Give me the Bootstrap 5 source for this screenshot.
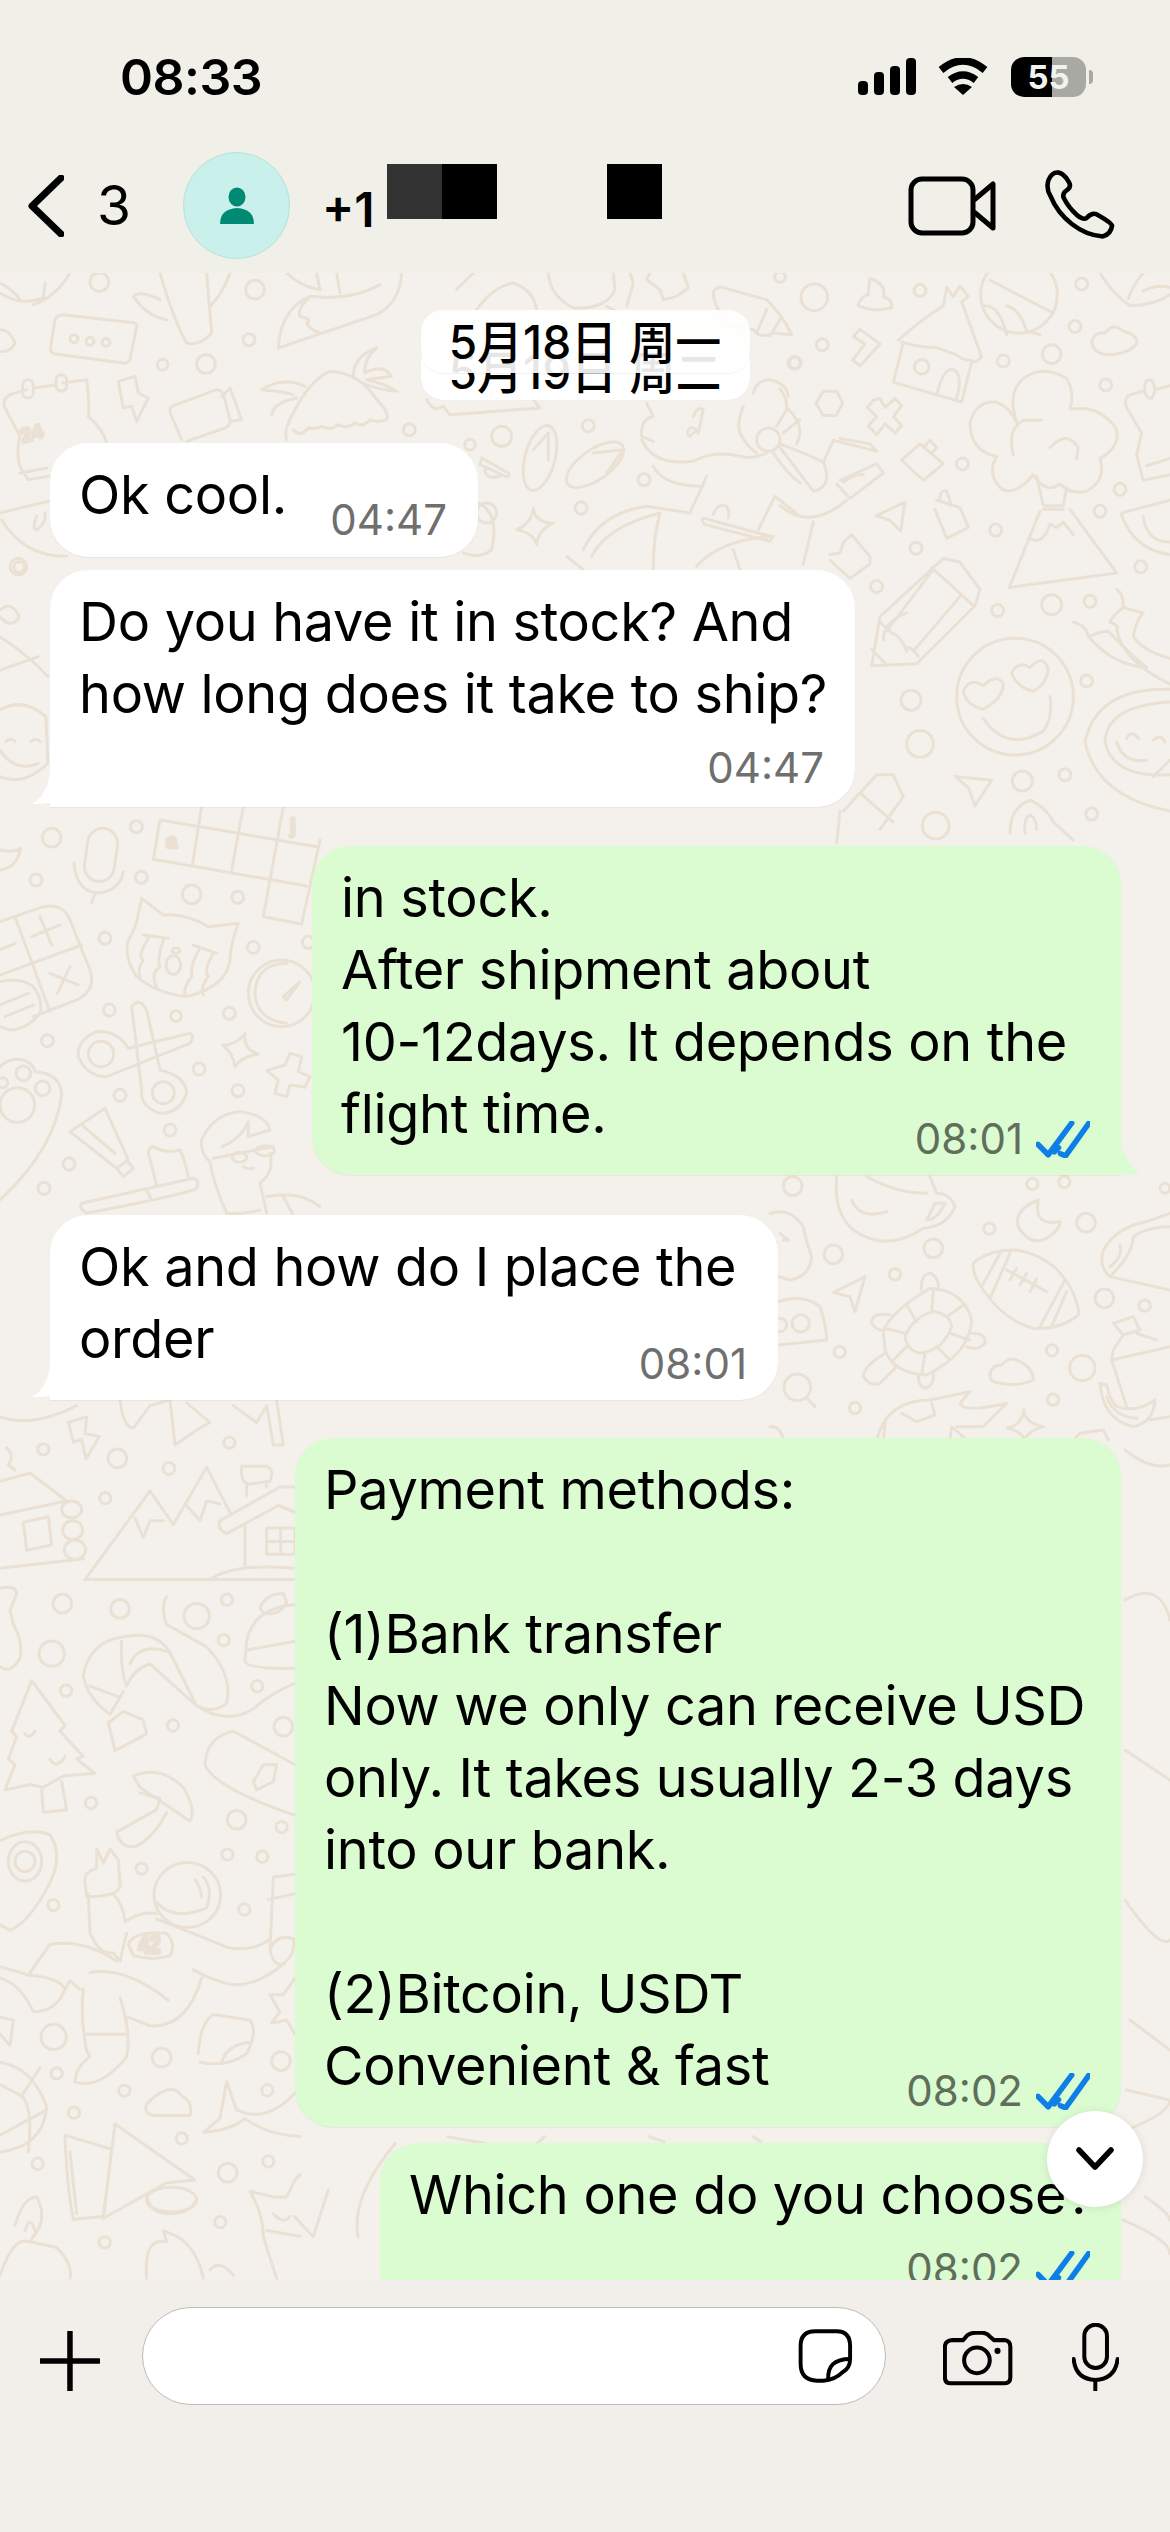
<!DOCTYPE html>
<html lang="en">
<head>
<meta charset="UTF-8">
<meta name="viewport" content="width=device-width, initial-scale=1.0">
<title>Chat</title>
<link href="https://cdn.jsdelivr.net/npm/bootstrap@5.3.0/dist/css/bootstrap.min.css" rel="stylesheet">
<style>
    html, body { margin: 0; background: #f2efea; }
    .phone { width: 1170px; height: 2532px; font-family: Inter, "Noto Sans CJK SC", sans-serif; color: #000; }

    /* top */
    .top-area { height: 273px; background: #f0efe8; flex: none; }
    .status-row { height: 152px; padding: 57px 77px 0 120px; }
    .clock { font-size: 50px; font-weight: 600; line-height: 40px; letter-spacing: -.5px; }
    .batt { width: 75px; height: 40px; border-radius: 13px; margin-left: 23px; font-size: 33px; font-weight: 700; line-height: 40px; color: #f2f2ee; text-align: center;
            background: linear-gradient(90deg, #000 55%, #a9a9a3 55%); }
    .batt-nub { width: 4px; height: 14px; margin-left: 3px; border-radius: 0 4px 4px 0; background: #a9a9a3; }
    .wifi-icon { margin-left: 22px; }
    .nav-row { height: 107px; padding-left: 28px; padding-right: 54px; }
    .unread { font-size: 55px; margin-left: 33px; width: 86px; }
    .avatar { width: 107px; height: 107px; border-radius: 50%; background: #c9f0ea; border: 1px solid #b5e2da; margin-right: 32px; }
    .peer { font-size: 48px; font-weight: 600; line-height: 60px; margin-top: 8px; }
    .mask-a, .mask-b { width: 110px; height: 55px; margin-left: 12px; margin-top: -28px; background: linear-gradient(90deg, #333 50%, #000 50%); }
    .mask-b { width: 55px; margin-left: 110px; background: #000; }

    /* chat */
    .chat { background: #f4f1ec; padding-top: 67px; }
    .wallpaper { left: 0; top: 0; width: 1170px; height: 2007px; }
    .wallpaper * { fill: none; stroke: #eae1d4; stroke-width: 3px; stroke-linecap: round; stroke-linejoin: round; vector-effect: non-scaling-stroke; }
    .wallpaper text { font-family: "Liberation Sans", sans-serif; font-size: 60px; font-weight: 700; }
    .stack { z-index: 1; }
    .day-pill { width: 329px; height: 60px; margin: 0 auto 43px; background: #fff; border-radius: 22px; font-size: 46px; font-weight: 500; line-height: 64px; text-align: center; box-shadow: 0 0 1px rgba(0,0,0,.1); white-space: nowrap; }
    .day-over { left: 0; top: -30px; width: 329px; height: 63px; background: rgba(255,255,255,.9); border-radius: 22px; box-shadow: 0 1px 1px rgba(0,0,0,.06); line-height: 64px; }

    .msg { position: relative; padding: 16px 20px 25px 29px; font-size: 54px; line-height: 72px; border-radius: 38px; box-shadow: 0 1px 1px rgba(0,0,0,.05); letter-spacing: -.3px; white-space: nowrap; }
    .msg-in { background: #fff; margin-left: 50px; align-self: flex-start; }
    .msg-out { background: #dbfbd0; margin-right: 49px; align-self: flex-end; }
    .w1 { width: 428px; margin-bottom: 13px; padding-bottom: 26px; }
    .w2 { width: 805px; margin-bottom: 39px; }
    .w3 { width: 809px; margin-bottom: 40px; }
    .w4 { width: 728px; margin-bottom: 38px; }
    .w5 { width: 826px; margin-bottom: 16px; }
    .w6 { width: 741px; }
    .tail-l { border-bottom-left-radius: 0; }
    .tail-r { border-bottom-right-radius: 0; }
    .tail-svg-l { left: -18px; bottom: 0; width: 50px; height: 40px; }
    .tail-svg-r { right: -19px; bottom: 0; width: 50px; height: 40px; }
    .stamp { font-size: 42px; line-height: 42px; letter-spacing: 0; color: #6f6f6f; align-self: flex-end; flex: none; margin-bottom: -10px; margin-right: 11px; }
    .msg-out .stamp { color: #5f6f5c; }
    .stamp svg { width: 54px; height: 37px; margin-left: 13px; vertical-align: -4px; }
    .stamp-line { margin-top: 17px; margin-bottom: -7px; }

    .down-btn { right: 27px; top: 1838px; width: 96px; height: 96px; border-radius: 50%; background: #fff; z-index: 2; box-shadow: 0 1px 8px rgba(0,0,0,.1); }

    /* bottom */
    .composer { height: 252px; flex: none; background: #f2efea; padding: 27px 51px 0 40px; }
    .input-pill { width: 745px; height: 98px; margin: 0 57px 0 42px; background: #fff; border: 1.5px solid #bcbcb8; border-radius: 49px; padding-right: 31px; }
    .mic-icon { margin-left: 59px; }
</style>
</head>
<body>
<div class="phone d-flex flex-column overflow-hidden">

    <div class="top-area">
        <div class="status-row d-flex align-items-start justify-content-between">
            <div class="clock">08:33</div>
            <div class="d-flex align-items-center">
                <svg width="58" height="38" viewBox="0 0 58 38">
                    <rect x="0" y="23" width="10" height="14" rx="4"/>
                    <rect x="16" y="14" width="10" height="23" rx="4"/>
                    <rect x="32" y="8" width="10" height="29" rx="4"/>
                    <rect x="48" y="0" width="10" height="37" rx="4"/>
                </svg>
                <svg class="wifi-icon" width="50" height="38" viewBox="0 0 50 38">
                    <path d="M3 12 Q25 -6 47 12" fill="none" stroke="#000" stroke-width="7.5"/>
                    <path d="M12 22 Q25 12 38 22" fill="none" stroke="#000" stroke-width="7.5"/>
                    <path d="M16 29 Q25 23 34 29 L25 37Z"/>
                </svg>
                <div class="batt">55</div>
                <div class="batt-nub"></div>
            </div>
        </div>
        <div class="nav-row d-flex align-items-center">
            <svg width="36" height="62" viewBox="0 0 36 62"><path d="M33 3 L4 31 L33 59" fill="none" stroke="#000" stroke-width="7" stroke-linecap="round" stroke-linejoin="round"/></svg>
            <div class="unread">3</div>
            <div class="avatar d-flex align-items-center justify-content-center">
                <svg width="36" height="38" viewBox="0 0 36 38"><ellipse cx="18" cy="10" rx="8.5" ry="9.5" fill="#018a73"/><path d="M1 37 Q1 22 18 21 Q35 22 35 37Z" fill="#018a73"/></svg>
            </div>
            <div class="peer">+1</div>
            <div class="mask-a"></div>
            <div class="mask-b"></div>
            <div class="ms-auto d-flex align-items-center gap-5">
                <svg width="88" height="60" viewBox="0 0 88 60" fill="none" stroke="#000" stroke-width="5" stroke-linejoin="round"><rect x="3" y="3" width="62" height="54" rx="11"/><path d="M66 24 L85 8 V52 L66 36"/></svg>
                <svg width="72" height="72" viewBox="670 425 220 220"><path d="M715 433 Q695 430 684 455 Q675 480 690 505 Q710 555 755 590 Q800 625 850 628 Q875 620 878 595 Q875 585 830 560 Q815 555 800 572 Q790 578 770 562 Q745 540 730 510 Q725 495 742 485 Q755 475 745 460 Q730 435 715 433Z" fill="none" stroke="#000" stroke-width="14" stroke-linejoin="round"/></svg>
            </div>
        </div>
    </div>

    <div class="chat flex-grow-1 position-relative overflow-hidden d-flex flex-column">
        <svg class="wallpaper position-absolute" viewBox="0 273 1170 2007" id="wall">
            <g transform="translate(0,273) scale(.3333)">
                <path d="M190 125 L405 150 Q415 155 408 170 L390 260 Q385 272 370 270 L165 243 Q148 238 152 222 L165 140 Q170 125 190 125Z"/>
                <path d="M0 60 Q60 100 130 75 L135 30 M0 30 Q40 50 60 80 M100 95 Q170 70 210 0"/>
                <path d="M480 0 Q520 140 560 210 Q600 220 635 180 L620 0 M500 140 Q440 130 400 70 Q420 50 480 80 M690 0 Q670 60 630 100"/>
                <path d="M835 225 L1130 125 Q1200 90 1205 0 M835 225 Q840 110 930 70 Q1050 85 1140 35 M930 70 Q890 110 900 130 Q940 140 920 150 Q930 170 960 180 M860 0 Q900 40 960 50 L950 0 M1010 0 L1020 60"/>
                <path d="M80 350 L30 365 Q5 380 15 405 L60 490 Q45 550 65 590 L85 620 L200 600 M60 600 L140 585 M190 330 L260 320 Q270 400 265 430 Q310 470 320 510"/>
                <rect x="68" y="320" width="32" height="55" rx="16"/><rect x="168" y="305" width="32" height="50" rx="16"/><path d="M100 345 L168 335"/>
                <text x="68" y="510" transform="rotate(-15 68 510)">24</text>
                <path d="M355 325 L405 310 L415 360 L445 375 L410 445 L395 400 L370 405Z"/>
                <path d="M515 400 L650 350 Q665 350 670 365 L690 440 Q690 460 675 465 L560 505 M515 400 Q505 410 515 430 L545 500 M665 370 L690 345 L725 440 L690 445"/>
                <path d="M860 500 Q850 470 880 420 Q930 320 990 295 Q1080 300 1130 380 Q1170 420 1160 440 Q1130 450 1110 440 Q1090 465 1065 450 Q1040 470 1015 455 Q990 475 965 460 Q940 470 925 465 Q900 495 880 470"/>
                <path d="M915 340 Q850 310 785 350 Q850 355 880 365 M890 375 Q820 390 815 425 M1060 310 Q1060 250 1130 225 Q1090 260 1095 300 Q1150 270 1175 310 L1100 320 Q1150 330 1190 355 Q1130 350 1090 330"/>
                <path d="M0 720 L145 685 M5 740 Q70 850 200 850 M110 730 Q95 770 110 770 Q140 750 135 720 M0 170 Q30 170 45 210 Q30 240 0 235"/>
            </g>
            <g transform="translate(420,273) scale(.3333)">
                <path d="M110 50 L160 0 M170 110 Q220 40 280 30 Q340 50 350 110 M385 0 Q390 70 460 105 Q560 110 585 50 L580 0 M560 100 L590 115 M620 100 L640 30 L630 0 M690 0 L680 20 L720 50 L730 80 L770 70 L805 45 L790 0"/>
                <path d="M880 60 Q890 30 930 50 Q1000 70 1040 80 Q1090 130 1115 185 L1060 180 Q1020 200 1000 170 L930 160 Q880 100 880 60 M1040 110 L1010 180 M1080 140 L1050 190"/>
                <path d="M20 380 Q40 420 70 400 L90 425 L360 405 L340 380"/>
                <ellipse cx="360" cy="555" rx="45" ry="100" transform="rotate(15 360 555)"/>
                <path d="M340 530 L385 480 L385 560"/>
                <ellipse cx="525" cy="575" rx="100" ry="45" transform="rotate(-35 525 575)"/>
                <path d="M520 540 L610 530 L560 600"/>
                <path d="M810 490 Q825 470 835 480 L850 410 Q830 400 820 430 M810 490 Q795 480 810 465 Q825 460 835 480"/>
                <path d="M680 390 L700 430 Q660 440 665 490 L700 505 M665 500 Q700 580 820 565 Q880 530 960 550 Q1000 560 1040 540 M860 610 L810 720 M1060 540 Q1100 600 1140 630 M700 580 Q730 640 850 640"/>
                <path d="M1000 360 Q1010 320 1050 320 Q1100 330 1105 370 M970 400 Q950 450 960 480 Q980 520 1010 540 M1070 460 L1100 410 M1090 480 L1140 440"/>
                <path d="M185 555 L265 600 Q270 610 260 612 L180 575Z M195 590 Q195 620 240 610 M175 690 Q240 720 215 830 Q180 860 130 840"/>
                <path d="M340 705 Q345 750 400 750 Q355 770 350 815 Q340 780 290 770 Q335 750 340 705Z"/>
                <path d="M490 830 Q540 720 680 700 L810 720 M515 850 Q560 760 720 720 M440 850 L490 890 M720 720 Q700 790 700 890 M850 735 L1050 790 Q1060 795 1050 805 L855 755 Q840 740 850 735 M880 725 Q890 690 920 700 Q930 715 925 735 M1015 770 L1065 670 L1140 730 M830 880 Q900 800 1060 790 M940 830 L960 890"/>
            </g>
            <g transform="translate(780,273) scale(.3333,.3636)">
                <path d="M108 358 L130 325 L170 325 L188 358 L168 392 L130 392Z"/>
                <path d="M235 85 Q250 60 265 60 Q265 40 270 15 Q320 30 310 65 Q340 75 335 95 Q280 110 235 90"/>
                <path d="M355 185 Q420 130 490 90 L500 40 L520 65 L540 35 L565 65 L545 80 L605 230 Q590 250 570 240 Q550 240 530 225 Q500 215 470 205 Q420 205 365 190 M370 190 L340 300 L545 355 L575 245 M470 335 Q490 260 520 265 Q550 280 530 345"/>
                <path d="M630 20 L820 110 M615 90 Q660 90 680 170 M680 90 Q720 100 740 160 L780 170"/>
                <path d="M960 0 Q1000 60 1050 90 Q1120 90 1170 60 M1045 70 Q1060 30 1090 0 M1090 50 Q1130 30 1170 40"/>
                <path d="M935 190 Q945 160 975 165 Q1000 135 1030 160 Q1075 170 1070 195 Q1040 225 980 225 Q940 220 935 190Z"/>
                <path d="M240 155 L300 195 L240 255 L218 240 L255 195 L220 175Z"/>
                <path d="M300 345 L315 370 L345 345 L365 365 L340 395 L365 420 L345 440 L315 415 L290 445 L265 420 L290 395 L262 370 L280 350Z"/>
                <path d="M0 470 Q60 490 130 520 M0 320 Q20 340 20 370 Q80 420 50 470 M0 480 L100 600 Q160 590 130 520 L160 460 L290 490 L270 470 L180 455 M180 570 L290 525 L310 550 L210 620 L170 580 M190 575 Q230 550 250 555 M0 640 Q90 710 200 625 M100 685 L70 800"/>
                <path d="M365 515 L420 470 L490 525 L430 570Z M430 480 L450 460 L470 480 L455 495"/>
                <path d="M470 625 L540 645 L565 700 L500 730 L465 650 M480 620 Q480 595 500 600 L515 640"/>
                <path d="M288 668 L375 630 L362 710 L330 680Z"/>
                <path d="M710 410 Q680 330 730 290 Q790 250 860 290 Q885 330 870 375 Q960 360 1010 430 Q1020 480 960 510 Q980 570 920 600 Q870 610 840 580 Q800 610 760 555 Q700 620 660 590 Q620 550 650 505 Q570 490 570 410 Q590 350 650 355 Q690 370 710 410 M700 500 Q680 430 730 405 L785 405 M810 480 Q860 430 895 480 L890 510"/>
                <path d="M770 560 L790 640 L850 640 L860 590 M790 650 L850 650 M780 655 L688 865 L1010 825 L870 650 M750 730 Q790 750 810 690 L830 700 L850 685 L880 720"/>
                <path d="M1170 310 L1130 320 M1095 320 Q1090 290 1115 295 Q1135 320 1115 345 Q1095 345 1095 320 M1090 325 L1050 335 Q1030 345 1040 370 L1085 440 L1070 500 L1090 570 L1170 555 M1100 530 L1170 510"/>
                <path d="M1025 660 L1170 625 M1025 665 Q1060 760 1170 775 M1170 740 Q1100 740 1090 670"/>
                <path d="M300 945 L490 785 L540 795 L600 870 L585 915 L410 1075 L275 1080Z M455 810 L580 915 M380 935 Q310 960 310 1010 M300 960 L335 990 Q365 1000 380 1040 M400 1040 L540 890 M380 1030 Q400 1030 415 1055 M275 1035 L320 1078 M320 985 L460 815"/>
                <path d="M150 775 L180 770 L190 740 L215 720 L270 780 L270 800 L210 840 L150 790"/>
                <path d="M610 1225 Q680 1320 790 1260 Q820 1220 810 1165"/>
                <path d="M550 1150 Q570 1110 610 1135 Q650 1100 670 1130 Q670 1170 610 1200 Q560 1190 550 1150Z"/>
                <path d="M695 1100 Q715 1065 750 1085 Q790 1045 805 1090 Q800 1130 760 1150 Q710 1140 695 1100Z"/>
                <path d="M880 960 Q920 970 925 1000 Q1000 1080 1100 1085 Q1030 1030 985 985 Q960 985 925 1000 M1010 870 Q1030 880 1030 920 Q1000 940 990 960 Q1020 970 1010 980 Q1030 1070 1170 1130 M1030 920 L1090 935 Q1070 950 1060 1000 Q1090 1040 1170 1060"/>
                <path d="M1170 1145 Q950 1140 915 1290 Q950 1440 1170 1480 M1170 1180 Q980 1190 975 1290 Q1000 1390 1170 1380 M1010 1290 Q1030 1350 1100 1340 M1040 1280 Q1055 1255 1075 1280 M1120 1285 Q1140 1265 1155 1290 M1120 1385 L1170 1340"/>
                <path d="M525 1385 L635 1395 L585 1465 L565 1415Z"/>
                <path d="M190 1480 L290 1380 L340 1380 L370 1440 L300 1530 M240 1430 L340 1510 M170 1568 L180 1480"/>
                <path d="M690 1540 Q690 1470 750 1450 Q800 1470 820 1510 L880 1560 M735 1540 Q730 1500 750 1490 Q770 1500 770 1530"/>
            </g>
            <g transform="translate(0,430) scale(.3827,.3333)">
                <path d="M0 840 Q60 800 120 860 L125 1000 Q60 1070 0 1040 M15 935 Q30 920 40 935 M80 935 Q95 920 105 935 M0 960 Q40 1030 100 1000"/>
                <path d="M0 540 Q30 510 50 560 Q30 600 0 560 M0 620 Q80 680 125 740 M0 720 L100 680"/>
            </g>
            <g transform="translate(0,800) scale(.3333)">
                <path d="M480 60 L950 140 M460 178 L920 258 M480 60 L460 178 M605 20 L578 190 M730 20 L695 210 M850 20 L790 350 L905 372 L960 120"/>
                <text x="498" y="145">a</text><text x="870" y="100">j</text>
                <rect x="258" y="85" width="90" height="160" rx="45" transform="rotate(8 305 165)"/>
                <path d="M222 190 Q230 280 300 278 Q360 270 370 215 M285 280 L275 310 M0 210 Q50 205 62 145 Q40 160 0 150"/>
                <path d="M0 365 L130 320 Q190 310 210 360 L270 510 Q290 570 230 600 L100 650 M45 350 L150 635 M0 525 L245 435 M95 410 L180 375 M120 350 L155 435 M150 520 L235 555 M210 500 L172 580 M0 545 Q60 530 100 560 Q130 600 120 640 Q80 690 30 690 Q10 685 0 680 M0 615 L85 580 M15 650 L100 615 M0 450 L45 430"/>
                <path d="M425 295 L490 345 Q560 340 625 380 L715 370 Q690 440 690 480 Q680 560 560 590 Q470 580 410 530 Q370 470 385 420 Q410 380 415 340Z M430 405 L505 415 M445 415 Q410 470 430 480 Q410 510 420 530 M490 420 Q470 480 480 500 Q450 520 470 560 M580 435 L650 460 M600 445 Q570 490 575 530 Q550 560 555 585 M640 460 Q610 510 625 530 Q600 560 610 585"/>
                <ellipse cx="520" cy="495" rx="22" ry="28"/><ellipse cx="528" cy="452" rx="12" ry="8"/>
                <path d="M860 490 Q770 490 765 580 Q770 660 860 670 M900 545 L850 590 L860 600Z"/>
                <path d="M385 745 Q350 690 290 695 Q230 720 235 770 Q260 830 320 830 L395 800 M385 745 L570 700 Q585 710 570 730 L395 800"/>
                <path d="M395 620 Q420 590 440 630 L480 810 Q560 830 560 880 Q540 940 480 940 Q420 920 425 870 L395 620"/>
                <path d="M735 700 Q730 750 775 762 Q725 770 705 800 Q700 760 668 735 Q710 735 735 700Z"/>
                <path d="M800 812 L855 795 L870 760 L905 770 L895 815 L930 830 L915 862 L870 855 L860 890 L825 880 L835 840Z"/>
                <path d="M0 800 Q30 770 70 780 Q100 790 105 815 Q180 820 185 880 Q170 1040 0 1200"/>
                <path d="M210 995 L315 925 L385 1080 L350 1105Z M245 975 L345 1060 M350 1105 L370 1130 L400 1105 L380 1080"/>
                <path d="M245 1210 L580 1135 Q600 1140 590 1165 Q570 1180 260 1240 Q235 1225 245 1210 M440 1170 L455 1200 M470 1155 L445 1060 Q450 1030 470 1045 Q500 1060 540 1050 Q555 1080 565 1130"/>
                <path d="M605 1020 Q640 940 720 935 Q800 945 810 990 L745 1010 L745 965 Q720 1020 665 1040 M640 1075 L820 1040 M630 1085 Q640 1150 680 1240 M605 1020 Q600 1060 630 1085 M810 1060 Q820 1100 800 1130 L780 1150 L800 1240 M800 1190 Q900 1170 960 1220 M680 1240 Q720 1245 780 1230 M850 1190 L880 1245 M730 1100 Q745 1110 760 1105"/>
                <ellipse cx="718" cy="1072" rx="22" ry="15"/><ellipse cx="795" cy="1052" rx="28" ry="15"/>
            </g>
            <g transform="translate(770,1170) scale(.3333)">
                <path d="M200 20 Q190 130 250 180 Q350 250 460 175 Q530 170 555 110 Q540 70 500 70 L480 20 M290 20 Q380 70 470 70 M245 90 Q270 150 350 125 M470 150 Q500 150 525 100 L495 100Z"/>
                <path d="M805 90 Q730 120 745 170 Q780 230 830 205 Q870 180 870 155 Q790 170 805 90Z"/>
                <path d="M610 280 Q650 240 740 240 Q850 260 900 350 Q930 410 925 435 Q870 480 790 475 Q700 450 640 360 Q605 310 610 280 M690 250 L635 350 M720 250 L660 385 M885 330 L810 470 M890 365 L845 470 M710 300 L830 365 M740 295 L720 330 M770 310 L750 345 M800 325 L780 365"/>
                <path d="M340 480 Q370 420 480 355 Q580 360 605 450 Q600 550 470 615 Q370 610 345 540Z M405 500 Q430 440 490 425 Q540 430 545 470 Q520 540 450 550 Q410 540 405 500Z M440 455 L410 405 M485 425 L490 360 M530 440 L580 405 M540 490 L600 510 M500 530 L540 570 M465 550 L455 615 M410 530 L370 570 M405 490 L345 475"/>
                <path d="M455 360 Q450 310 485 310 Q510 330 505 360 M360 435 Q305 425 305 460 Q320 485 345 480 M605 490 Q650 490 645 520 Q620 545 590 530 M345 550 Q280 590 280 620 Q300 650 330 640 L380 590 M445 615 Q445 655 470 655 Q495 640 490 610"/>
                <path d="M285 320 L190 368 L240 380 L255 425Z"/>
                <path d="M660 620 Q660 585 695 585 Q720 555 750 575 Q790 595 790 630 Q750 650 690 640 Q660 635 660 620"/>
                <path d="M0 130 Q60 110 100 170 Q110 220 125 260 Q120 320 60 330 L25 320 M30 190 L55 210 L40 210 M25 395 Q100 370 150 410 Q170 470 170 510 L25 525 M110 685 L135 710"/>
                <path d="M1200 130 L1130 155 Q1040 170 1000 240 Q985 290 1020 320 L1200 360 M1020 320 Q1090 250 1090 200 Q1130 170 1200 170 M1020 290 Q1060 260 1050 225"/>
                <path d="M1030 460 L1090 440 L1110 480 L1060 495Z M1060 495 L1030 540 L1025 570 L1200 530 M1025 570 L1070 710 M1100 490 L1160 510"/>
                <path d="M990 640 Q1000 750 1090 770 Q1150 760 1155 690 Q1100 730 1040 710 Q1020 690 1010 645Z M1010 680 Q1030 740 1100 745 M1140 750 L1200 740"/>
                <path d="M762 720 Q765 760 820 770 Q770 785 765 810 Q750 780 712 775 Q755 765 762 720Z"/>
                <path d="M320 810 Q350 690 480 690 L600 665 L570 700 Q580 730 710 700 L640 770 L560 770 M395 730 L440 755 L495 735 L485 700 M540 810 L545 770 L590 810 M345 760 L340 810 M910 810 L930 790 L1000 780 L1015 810 M0 770 Q30 765 40 810"/>
            </g>
            <g transform="translate(0,1400) scale(.3333,.5612)">
                <path d="M255 320 L450 162 L520 222 L620 120 L690 200 M255 320 L880 320 M630 320 Q700 290 880 300 M405 210 L430 245 L450 215 L490 215 M555 185 L600 215 L620 180 L660 185"/>
                <path d="M660 215 L840 155 L885 155 M680 238 L835 188 L885 200 M660 215 Q650 230 680 238 M735 225 L735 295 M725 118 Q720 145 745 150 L810 145 Q825 125 800 118Z M740 150 L740 170 M800 145 L800 155 M800 228 L885 228 L885 275 L800 275Z M842 228 L842 275 M800 252 L885 252"/>
                <path d="M0 145 L90 130 L200 180 L0 205 M70 218 L145 208 L155 258 L80 268Z M0 300 L250 283 M20 85 Q45 100 25 115 L45 125"/>
                <ellipse cx="215" cy="195" rx="30" ry="15"/><ellipse cx="218" cy="232" rx="30" ry="17"/><ellipse cx="225" cy="267" rx="32" ry="17"/>
                <path d="M0 335 Q50 330 50 345 L30 375 L40 400 Q70 430 60 460 Q30 490 0 475"/>
                <path d="M250 490 Q270 430 370 422 Q470 410 510 450 L590 545 Q640 560 680 540 Q700 490 620 440 L500 400 Q480 370 500 350 M250 490 Q260 530 330 560 L370 520 M270 510 L360 530 M365 430 Q360 480 380 510 Q400 480 450 470 L590 545 M390 470 Q420 430 510 450 M325 575 L345 625 L440 595 L430 570 L370 555Z M590 545 Q680 580 760 550 Q820 520 885 505"/>
                <path d="M885 365 Q760 370 740 430 L735 465 Q740 480 885 478 M885 430 L745 445 M780 370 Q800 345 850 345 L860 360 Q840 385 790 380Z"/>
                <path d="M885 650 L700 590 Q620 600 615 650 Q640 690 885 740 M760 680 L790 650 L830 650 L820 680 L770 695Z"/>
                <path d="M95 500 L195 580 L180 590 L250 635 L230 640 L285 665 L190 670 L130 690 L90 685 L15 695 L45 650 L25 640 L50 600 L35 590Z M125 695 L130 735 L200 730 L185 680 M75 595 Q90 605 105 590 M150 640 Q170 660 195 635"/>
                <path d="M400 670 Q480 650 550 690 Q590 730 570 750 L420 690Z M420 700 L480 710 L470 730 Q380 760 350 770 Q360 800 410 795 Q460 780 500 735"/>
                <path d="M0 785 Q90 760 150 775 Q190 810 150 860 Q90 930 30 945 L0 935"/>
                <ellipse cx="75" cy="822" rx="50" ry="35"/><ellipse cx="75" cy="822" rx="30" ry="18"/>
                <ellipse cx="562" cy="882" rx="100" ry="58"/>
                <path d="M470 895 Q520 930 620 905 Q640 870 610 850 M585 855 Q600 865 605 885 M265 880 L270 950 Q300 990 340 985 L360 1000 M340 880 Q370 900 375 930 Q420 910 470 915 M255 860 Q250 840 290 835 L290 800 L310 825 L330 800 L355 820 L360 860 Q370 885 260 885Z"/>
                <path d="M385 970 Q400 945 500 950 Q530 970 510 990 Q460 1000 400 990Z"/>
                <text x="415" y="985" transform="translate(0,985) scale(1,.75) translate(0,-985)">42</text>
                <path d="M360 1000 L380 950 M470 925 Q620 960 680 975 Q760 985 810 960 M810 980 L820 850 L885 845 M805 890 L885 880 M810 980 Q830 950 880 960 Q890 985 850 1005 Q820 1010 810 980 M850 1005 Q760 1050 680 1040 Q620 1030 580 1015 M605 1030 Q560 1120 450 1115 L385 1100 M0 1010 Q60 1020 85 1025 L150 970 Q250 960 350 1000 M90 1025 Q180 1030 195 1050 Q170 1090 100 1090 M0 1030 Q60 1040 100 1090 M195 1050 L210 1035 L240 1050 M270 1020 Q380 1010 505 1070 M250 1050 Q240 1100 260 1160 L270 1170 Q225 1190 225 1215 Q300 1230 380 1170 Q395 1130 360 1065 M260 1130 L375 1130"/>
                <path d="M885 1030 L850 1060 L810 1060 L840 1090 L815 1110 L860 1105 L885 1130 M595 1165 Q600 1110 640 1095 L750 1105 Q775 1125 740 1165 Q680 1190 600 1180 M665 1180 Q680 1150 745 1145"/>
                <path d="M610 1305 L660 1280 L680 1215 L710 1265 Q800 1290 885 1235 M610 1305 Q700 1300 735 1280 Q800 1310 900 1312 M440 1255 Q470 1235 500 1230 Q530 1225 545 1240 Q580 1250 570 1275 L460 1275 Q430 1270 440 1255"/>
                <path d="M195 1310 L335 1335 L310 1455 L220 1460 Q200 1400 195 1310 M345 1290 L585 1390 L500 1395 L310 1458Z M210 1340 L230 1450 M440 1420 Q450 1450 510 1450 Q570 1450 590 1425"/>
                <ellipse cx="515" cy="1425" rx="75" ry="22"/>
                <path d="M0 1180 Q100 1190 140 1260 Q130 1330 0 1340 M0 1220 L65 1240 M0 1310 L140 1265 M65 1240 Q100 1260 85 1340 M65 1240 L120 1190 M0 1100 L40 1105 L30 1150 L0 1130"/>
                <path d="M750 1410 L820 1420 L860 1420 L885 1390 L900 1380 M750 1410 Q790 1450 790 1490 Q810 1530 830 1565 M800 1480 L900 1490 M820 1450 Q850 1470 870 1455"/>
                <path d="M45 1470 Q70 1420 110 1420 Q145 1460 100 1490 L90 1500 L170 1510 Q220 1540 210 1565 M75 1480 Q90 1450 105 1480 M0 1560 Q40 1490 85 1500 M440 1565 Q430 1490 500 1500 L490 1480 L530 1490 Q590 1510 610 1565 M630 1550 Q660 1530 700 1560"/>
                <path d="M0 30 Q100 50 230 10 M360 0 Q370 50 400 50 L450 10 L510 0 L525 80 L600 50 L630 40 L560 5 M700 10 L770 40 L800 10 L820 80 L850 80 L830 0"/>
                <path d="M205 40 L260 30 L255 60 L298 65 L258 105 L245 70 L220 75Z"/>
            </g>
            <g transform="translate(0,2080) scale(.746,.3333)">
                <path d="M480 470 Q470 350 530 190 M395 410 L420 470 L440 330 M600 170 L650 190 M730 170 L720 190 M870 170 L890 185 M1010 170 L1020 185"/>
                <path d="M1510 150 Q1568 100 1568 60 M1510 30 L1568 60 M1505 420 Q1568 480 1568 520 M1535 350 Q1568 400 1568 420"/>
            </g>
            <path d="M1125 1450 Q1150 1470 1170 1465 M1125 1600 Q1160 1580 1170 1620 M1125 1750 L1170 1780 M1125 1900 Q1160 1950 1170 1940 M1130 2020 L1170 2050"/>
        </svg>

        <div class="stack position-relative d-flex flex-column">
            <div class="day-pill position-relative">
                5月19日 周二
                <div class="day-pill day-over position-absolute">5月18日 周一</div>
            </div>

            <div class="msg msg-in w1 d-flex justify-content-between">
                <span>Ok cool.</span>
                <span class="stamp">04:47</span>
            </div>

            <div class="msg msg-in tail-l w2">
                <svg class="tail-svg-l position-absolute" viewBox="0 0 50 40"><path d="M18 0 Q18 26 0 37 Q22 38 34 28 L50 40 H18Z" fill="#fff"/><path d="M18 0 H50 V40 H30Z" fill="#fff"/></svg>
                Do you have it in stock? And<br>how long does it take to ship?
                <div class="stamp stamp-line text-end">04:47</div>
            </div>

            <div class="msg msg-out tail-r w3">
                <svg class="tail-svg-r position-absolute" viewBox="0 0 50 40"><path d="M31 4 Q32 24 50 40 Q28 41 17 33 Q10 38 0 40 V4Z" fill="#dbfbd0"/></svg>
                in stock.<br>After shipment about<br>10-12days. It depends on the
                <div class="d-flex justify-content-between">
                    <span>flight time.</span>
                    <span class="stamp">08:01<svg viewBox="0 0 53 36"><path d="M2 23 L12 33 L35 2 M24 32 L29 34 L52 2 M22 26 L18 30" fill="none" stroke="#0f7fe8" stroke-width="5.5" stroke-linecap="round" stroke-linejoin="round"/></svg></span>
                </div>
            </div>

            <div class="msg msg-in tail-l w4">
                <svg class="tail-svg-l position-absolute" viewBox="0 0 50 40"><path d="M18 0 Q18 26 0 37 Q22 38 34 28 L50 40 H18Z" fill="#fff"/><path d="M18 0 H50 V40 H30Z" fill="#fff"/></svg>
                Ok and how do I place the
                <div class="d-flex justify-content-between">
                    <span>order</span>
                    <span class="stamp">08:01</span>
                </div>
            </div>

            <div class="msg msg-out w5">
                Payment methods:<br><br>(1)Bank transfer<br>Now we only can receive USD<br>only. It takes usually 2-3 days<br>into our bank.<br><br>(2)Bitcoin, USDT
                <div class="d-flex justify-content-between">
                    <span>Convenient &amp; fast</span>
                    <span class="stamp">08:02<svg viewBox="0 0 53 36"><path d="M2 23 L12 33 L35 2 M24 32 L29 34 L52 2 M22 26 L18 30" fill="none" stroke="#0f7fe8" stroke-width="5.5" stroke-linecap="round" stroke-linejoin="round"/></svg></span>
                </div>
            </div>

            <div class="msg msg-out w6">
                Which one do you choose?
                <div class="stamp stamp-line text-end">08:02<svg viewBox="0 0 53 36"><path d="M2 23 L12 33 L35 2 M24 32 L29 34 L52 2 M22 26 L18 30" fill="none" stroke="#0f7fe8" stroke-width="5.5" stroke-linecap="round" stroke-linejoin="round"/></svg></div>
            </div>
        </div>

        <div class="down-btn position-absolute d-flex align-items-center justify-content-center">
            <svg width="38" height="24" viewBox="0 0 38 24"><path d="M3 3 L19 20 L35 3" fill="none" stroke="#000" stroke-width="5.5" stroke-linecap="round" stroke-linejoin="round"/></svg>
        </div>
    </div>

    <div class="composer d-flex align-items-start">
        <svg class="mt-4" width="60" height="60" viewBox="0 0 60 60"><path d="M30 1 V59 M1 30 H59" stroke="#000" stroke-width="5.5" stroke-linecap="round"/></svg>
        <div class="input-pill d-flex align-items-center justify-content-end">
            <svg width="56" height="56" viewBox="112 140 172 172" fill="none" stroke="#000" stroke-width="12" stroke-linejoin="round"><path d="M165 150 H230 Q272 150 272 195 V235 Q272 262 250 275 Q225 300 190 302 H170 Q120 300 120 250 V195 Q120 150 165 150Z"/><path d="M205 300 Q200 235 272 235"/></svg>
        </div>
        <svg class="mt-4" width="70" height="56" viewBox="553 143 206 166" fill="none" stroke="#000" stroke-width="12" stroke-linejoin="round"><path d="M580 170 H612 L625 155 Q635 148 650 148 H670 Q685 150 692 160 L703 170 H735 Q752 172 752 190 V280 Q752 298 735 298 H575 Q558 298 558 280 V190 Q558 172 580 170Z"/><circle cx="653" cy="230" r="38"/><circle cx="714" cy="202" r="9" fill="#000" stroke="none"/></svg>
        <svg class="mt-3 mic-icon" width="47" height="68" viewBox="935 117 141 204" fill="none" stroke="#000" stroke-width="12" stroke-linecap="round"><rect x="972" y="122" width="68" height="130" rx="34"/><path d="M940 225 Q945 285 1005 288 Q1065 285 1072 225"/><path d="M1005 288 V318"/></svg>
    </div>
</div>

<script src="https://cdn.jsdelivr.net/npm/bootstrap@5.3.0/dist/js/bootstrap.bundle.min.js"></script>
<script>
    // little rings of the wallpaper: [left, top, scaleX, scaleY, x, y, r, x, y, r, ...]
    const rings = [
        [0, 273, 1/3, 1/3, 298,27,28, 765,50,28, 747,200,18, 488,275,16, 618,273,28, 57,882,16, 1228,470,18, 222,197,12, 270,205,12, 318,208,12],
        [420, 273, 1/3, 1/3, 1080,12,16, 1122,270,18, 505,458,18, 245,490,30, 150,515,16, 672,620,18, 483,705,18, 1045,500,35, 200,720,30],
        [780, 273, 1/3, 1/2.75, 103,67,40, 420,48,18, 905,30,18, 885,147,18, 127,197,18, 46,247,18, 815,223,28, 670,242,18, 977,308,18, 547,525,18, 1020,595,18, 960,655,18, 647,707,18, 408,757,18, 1082,808,18, 290,862,18, 653,928,18, 815,912,30, 930,903,18, 920,1122,18, 393,1175,30, 420,1295,40, 727,1397,30, 855,1380,18, 935,1488,18, 467,1520,40, 425,258,22, 717,60,115, 705,1165,175],
        [0, 430, .3827, 1/3, 48,410,25],
        [0, 800, 1/3, 1/3, 155,113,28, 409,80,18, 108,240,18, 424,232,18, 575,283,28, 713,292,18, 315,415,18, 760,442,18, 925,427,18, 328,630,18, 528,648,16, 688,640,18, 142,722,18, 597,807,18, 360,886,18, 714,872,18, 510,990,18, 207,1092,18, 132,1165,18, 845,580,100, 303,762,38, 490,878,33, 70,820,22, 128,865,22, 8,848,15, 52,915,52],
        [770, 1170, 1/3, 1/3, 68,48,28, 787,42,17, 883,36,17, 1185,55,15, 658,176,17, 948,158,28, 190,253,28, 490,235,28, 375,313,17, 1003,385,28, 1124,407,17, 846,541,17, 209,546,17, 937,594,38, 849,689,17, 255,714,17, 92,460,26, 30,465,20, 82,652,40],
        [0, 1400, 1/3, 1/1.782, 130,88,17, 352,104,28, 507,122,18, 688,76,17, 316,175,17, 187,363,28, 360,372,28, 681,356,17, 590,385,38, 671,428,17, 155,452,38, 198,518,17, 772,510,17, 850,582,28, 519,580,17, 273,718,17, 710,748,28, 845,761,17, 682,810,17, 787,814,17, 425,835,17, 160,900,17, 733,908,17, 161,1135,38, 485,1172,28, 843,1178,28, 170,1200,17, 802,1230,17, 373,1231,17, 222,1270,17, 545,1316,17, 113,1361,17, 805,1357,17, 683,1377,28, 661,1465,17, 314,1501,17]
    ];
    const wall = document.getElementById('wall');
    rings.forEach(([ox, oy, sx, sy, ...list]) => {
        for (let i = 0; i < list.length; i += 3) {
            const c = document.createElementNS('http://www.w3.org/2000/svg', 'circle');
            c.setAttribute('cx', ox + list[i] * sx);
            c.setAttribute('cy', oy + list[i + 1] * sy);
            c.setAttribute('r', list[i + 2] / 3);
            wall.appendChild(c);
        }
    });
</script>
</body>
</html>
